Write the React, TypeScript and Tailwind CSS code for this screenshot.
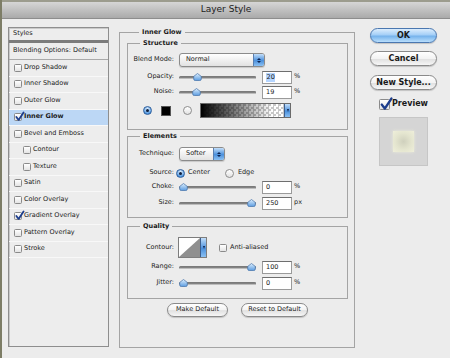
import React from "react";

const font = "font-['DejaVu_Sans',sans-serif]";

const Check: React.FC<{ checked?: boolean; big?: boolean }> = ({ checked, big }) => {
  const s = big ? "w-[11px] h-[11px]" : "w-[8px] h-[8px]";
  return (
    <span className={`relative block shrink-0 ${s} rounded-[1.5px] border border-[#8a8a8a] bg-[linear-gradient(#ffffff,#e4e4e4)]`}>
      {checked && (
        <svg
          className="absolute overflow-visible left-0 top-[-2px]"
          width={big ? 12 : 9}
          height={big ? 12 : 9}
          viewBox="0 0 10 10"
        >
          <path d="M1.5 5.5 L4 8.8 L9.5 0.5" fill="none" stroke="#1c3d8c" strokeWidth="2" strokeLinecap="round" strokeLinejoin="round" />
        </svg>
      )}
    </span>
  );
};

const Radio: React.FC<{ on?: boolean }> = ({ on }) =>
  on ? (
    <span className="flex items-center justify-center shrink-0 w-[9px] h-[9px] rounded-full border border-[#2e5f9c] bg-[radial-gradient(circle_at_50%_30%,#e6f3ff,#4d95df_75%)]">
      <span className="block w-[3px] h-[3px] rounded-full bg-[#0d1d3c]" />
    </span>
  ) : (
    <span className="block shrink-0 w-[9px] h-[9px] rounded-full border border-[#8d8d8d] bg-[linear-gradient(#ffffff,#e2e2e2)]" />
  );

const Slider: React.FC<{ pct: number }> = ({ pct }) => (
  <div className="relative ml-[5px] w-[77px] h-[14px] flex items-center shrink-0">
    <div className="w-full h-[3px] rounded-full bg-[linear-gradient(#5c5c5c,#a8a8a8)] border border-[#7a7a7a] border-b-[#bcbcbc]" />
    <svg
      className="absolute top-[3px]"
      width="9"
      height="8"
      viewBox="0 0 9 8"
      style={{ left: (pct / 100) * (77 - 9) }}
    >
      <defs>
        <linearGradient id="thumb" x1="0" y1="0" x2="0" y2="1">
          <stop offset="0" stopColor="#dcefff" />
          <stop offset="1" stopColor="#5c9ce0" />
        </linearGradient>
      </defs>
      <path d="M4.5 0.5 L8.3 3.4 V6 Q8.3 7.5 6.8 7.5 H2.2 Q0.7 7.5 0.7 6 V3.4 Z" fill="url(#thumb)" stroke="#4470a6" strokeWidth="0.7" />
    </svg>
  </div>
);

const NumBox: React.FC<{ value: string; selected?: boolean; unit?: string }> = ({ value, selected, unit = "%" }) => (
  <>
    <div className="ml-[6px] w-[30px] h-[13px] shrink-0 bg-white border border-[#9a9a9a] border-t-[#6e6e6e] flex items-center pl-[3px]">
      <span className={selected ? "bg-[#b5d5ff] leading-[9px] px-[0.5px]" : "leading-[9px]"}>{value}</span>
    </div>
    <span className="ml-[2px]">{unit}</span>
  </>
);

const Popup: React.FC<{ label: string; w: string }> = ({ label, w }) => (
  <div className={`ml-[5px] ${w} h-[14px] shrink-0 flex items-stretch rounded-[3px] border border-[#8b8b8b] bg-[linear-gradient(#ffffff,#f1f1f1_50%,#e2e2e2)] shadow-[0_1px_1px_rgba(0,0,0,0.15)] overflow-hidden`}>
    <span className="flex-1 pl-[6px] flex items-center">{label}</span>
    <span className="w-[11px] flex flex-col items-center justify-center gap-[1px] border-l border-[#5a7fb0] bg-[linear-gradient(#c2defa,#4b90dc_55%,#8cc1f3)]">
      <span className="w-0 h-0 border-l-[2px] border-r-[2px] border-b-[2.5px] border-l-transparent border-r-transparent border-b-[#0c2350]" />
      <span className="w-0 h-0 border-l-[2px] border-r-[2px] border-t-[2.5px] border-l-transparent border-r-transparent border-t-[#0c2350]" />
    </span>
  </div>
);

const Group: React.FC<{ title: string; className?: string; children: React.ReactNode }> = ({ title, className = "", children }) => (
  <fieldset className={`border border-[#a4a4a4] ${className}`}>
    <legend className="ml-[12px] px-[3px] h-[8px] leading-[8px] font-bold text-[#1a1a1a]">{title}</legend>
    {children}
  </fieldset>
);

const Label: React.FC<{ children: React.ReactNode }> = ({ children }) => (
  <span className="w-[46px] shrink-0 text-right">{children}</span>
);

const Pill: React.FC<{ children: React.ReactNode; className?: string; blue?: boolean }> = ({ children, className = "", blue }) => (
  <div
    className={`flex items-center justify-center rounded-full border ${
      blue
        ? "border-[#4a77b0] bg-[linear-gradient(#dcedfd,#a4cff7_45%,#76b3ec_55%,#b9defc)]"
        : "border-[#8a8a8a] bg-[linear-gradient(#ffffff,#f3f3f3_50%,#e1e1e1_55%,#f6f6f6)]"
    } shadow-[0_1px_1px_rgba(0,0,0,0.18)] ${className}`}
  >
    {children}
  </div>
);

const styleItems: { name: string; checked?: boolean; indent?: boolean; active?: boolean }[] = [
  { name: "Drop Shadow" },
  { name: "Inner Shadow" },
  { name: "Outer Glow" },
  { name: "Inner Glow", checked: true, active: true },
  { name: "Bevel and Emboss" },
  { name: "Contour", indent: true },
  { name: "Texture", indent: true },
  { name: "Satin" },
  { name: "Color Overlay" },
  { name: "Gradient Overlay", checked: true },
  { name: "Pattern Overlay" },
  { name: "Stroke" },
];

export default function App() {
  return (
    <div className={`${font} w-[450px] h-[358px] overflow-hidden bg-[#ececec] border-l-2 border-[#7d7d66] text-[6.5px] text-[#1a1a1a] flex flex-col`}>
      <div className="h-[19px] shrink-0 border-t-[2px] border-[#9c9c8e] bg-[linear-gradient(#d6d6d6,#aaaaaa)] border-b border-b-[#8d8d8d] flex items-center justify-center">
        <span className="text-[9px] text-[#202020]">Layer Style</span>
      </div>

      <div className="flex pl-[6px] pt-[8px]">
        {/* styles list */}
        <div className="w-[101px] h-[320px] shrink-0 border border-[#8e8e8e] shadow-[inset_1px_1px_0_#c9c9c9] bg-[#ededed] flex flex-col">
          <div className="h-[15px] pl-[4px] flex items-center border-b-[3px] border-[#7b7b7b]">Styles</div>
          <div className="h-[17px] pl-[4px] flex items-center border-b border-[#a9a9a9]">Blending Options: Default</div>
          {styleItems.map((it) => (
            <div
              key={it.name}
              className={`h-[16.5px] flex items-center border-b border-[#f8f8f8] ${it.indent ? "pl-[14px]" : "pl-[5px]"} ${
                it.active ? "bg-[#bcd7f5]" : ""
              }`}
            >
              <Check checked={it.checked} />
              <span className={`ml-[2px] ${it.active ? "font-bold" : ""}`}>{it.name}</span>
            </div>
          ))}
        </div>

        {/* main settings */}
        <Group title="Inner Glow" className="ml-[10px] mt-[1px] w-[236px] h-[320px] shrink-0 pl-[7px] pr-[6px]">
          <Group title="Structure" className="mt-[3px] pt-[6px] pb-[11px]">
            <div className="flex items-center h-[14px]">
              <Label>Blend Mode:</Label>
              <Popup label="Normal" w="w-[86px]" />
            </div>
            <div className="flex items-center h-[14px] mt-[3px]">
              <Label>Opacity:</Label>
              <Slider pct={20} />
              <NumBox value="20" selected />
            </div>
            <div className="flex items-center h-[14px] mt-[1px]">
              <Label>Noise:</Label>
              <Slider pct={19} />
              <NumBox value="19" />
            </div>
            <div className="flex items-center h-[15px] mt-[4px]">
              <span className="ml-[15px]">
                <Radio on />
              </span>
              <span className="ml-[9px] w-[10px] h-[10px] bg-black border border-[#555]" />
              <span className="ml-[12px]">
                <Radio />
              </span>
              <div className="ml-[8px] w-[91px] h-[15px] flex border border-[#6a6a6a] bg-[image:linear-gradient(to_right,#000_0%,rgba(0,0,0,0)_80%),repeating-conic-gradient(#c8c8c8_0%_25%,#ffffff_0%_50%)] bg-[length:100%_100%,5px_5px]">
                <span className="ml-auto w-[6px] flex items-center justify-center border-l border-[#3d5f8e] bg-[linear-gradient(#c2defa,#4b90dc_55%,#8cc1f3)]">
                  <span className="w-0 h-0 border-l-[1.5px] border-r-[1.5px] border-t-[3px] border-l-transparent border-r-transparent border-t-[#0c2350]" />
                </span>
              </div>
            </div>
          </Group>

          <Group title="Elements" className="mt-[2px] pt-[7px] pb-[7px]">
            <div className="flex items-center h-[14px]">
              <Label>Technique:</Label>
              <Popup label="Softer" w="w-[46px]" />
            </div>
            <div className="flex items-center h-[14px] mt-[5px]">
              <Label>Source:</Label>
              <span className="ml-[2px]">
                <Radio on />
              </span>
              <span className="ml-[3px]">Center</span>
              <span className="ml-[15px]">
                <Radio />
              </span>
              <span className="ml-[4px]">Edge</span>
            </div>
            <div className="flex items-center h-[14px]">
              <Label>Choke:</Label>
              <Slider pct={0} />
              <NumBox value="0" />
            </div>
            <div className="flex items-center h-[14px] mt-[2px]">
              <Label>Size:</Label>
              <Slider pct={100} />
              <NumBox value="250" unit="px" />
            </div>
          </Group>

          <Group title="Quality" className="mt-[4px] pt-[7px] pb-[8px]">
            <div className="flex items-center h-[21px]">
              <Label>Contour:</Label>
              <div className="ml-[4px] w-[29px] h-[21px] shrink-0 flex border border-[#7d7d7d] bg-white">
                <svg width="21" height="19" viewBox="0 0 21 19" className="shrink-0">
                  <polygon points="0,19 21,0 21,19" fill="#8f8f8f" />
                </svg>
                <span className="flex-1 flex items-center justify-center border-l border-[#3d5f8e] bg-[linear-gradient(#c2defa,#4b90dc_55%,#8cc1f3)]">
                  <span className="w-0 h-0 border-l-[1.5px] border-r-[1.5px] border-t-[3px] border-l-transparent border-r-transparent border-t-[#0c2350]" />
                </span>
              </div>
              <span className="ml-[12px] flex">
                <Check />
              </span>
              <span className="ml-[3px]">Anti-aliased</span>
            </div>
            <div className="flex items-center h-[14px] mt-[2px]">
              <Label>Range:</Label>
              <Slider pct={100} />
              <NumBox value="100" />
            </div>
            <div className="flex items-center h-[14px] mt-[2px]">
              <Label>Jitter:</Label>
              <Slider pct={0} />
              <NumBox value="0" />
            </div>
          </Group>

          <div className="mt-[4px] flex justify-center gap-[13px]">
            <Pill className="w-[61px] h-[14px]">Make Default</Pill>
            <Pill className="w-[67px] h-[14px]">Reset to Default</Pill>
          </div>
        </Group>

        {/* buttons */}
        <div className="ml-[15px] mt-[1px] w-[67px] shrink-0 flex flex-col text-[8px] font-bold">
          <Pill blue className="h-[15px]">OK</Pill>
          <Pill className="h-[15px] mt-[8px]">Cancel</Pill>
          <Pill className="h-[15px] mt-[9px]">New Style...</Pill>
          <div className="mt-[8px] ml-[9px] flex items-center h-[12px]">
            <Check checked big />
            <span className="ml-[2px]">Preview</span>
          </div>
          <div className="mt-[7px] ml-[9px] w-[49px] h-[49px] bg-[#d5d5d5] border border-[#c6c6c6] flex items-center justify-center">
            <div className="w-[21px] h-[21px] bg-[radial-gradient(circle,#cfd0bd_0%,#e4e5cf_55%,#efefda_100%)] shadow-[0_0_3px_#ecedd9]" />
          </div>
        </div>
      </div>
    </div>
  );
}
